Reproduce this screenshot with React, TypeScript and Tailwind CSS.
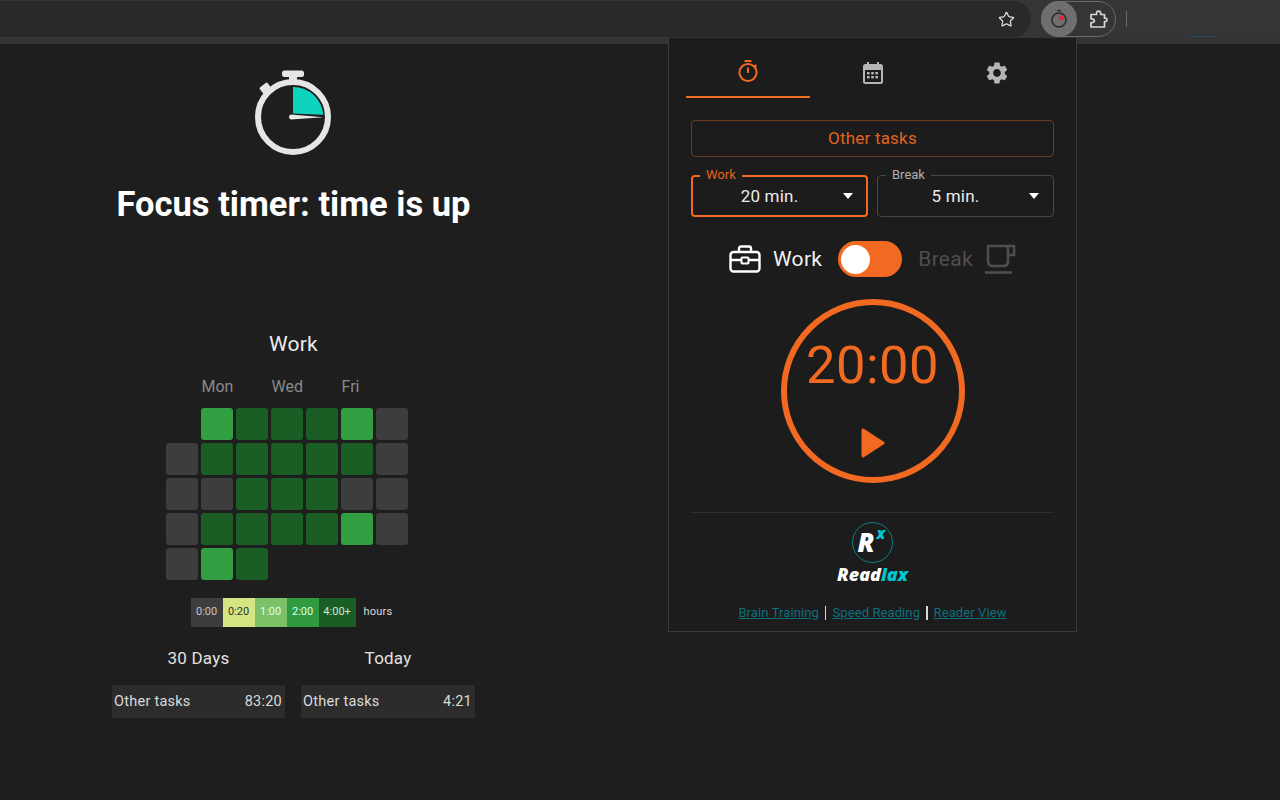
import { Star } from 'lucide-react';

const GREEN = 'bg-[#32a042]';
const DARK = 'bg-[#1a5e25]';
const GRAY = 'bg-[#3d3d3d]';

const heatmap = [
  [null, GREEN, DARK, DARK, DARK, GREEN, GRAY],
  [GRAY, DARK, DARK, DARK, DARK, DARK, GRAY],
  [GRAY, GRAY, DARK, DARK, DARK, GRAY, GRAY],
  [GRAY, DARK, DARK, DARK, DARK, GREEN, GRAY],
  [GRAY, GREEN, DARK, null, null, null, null],
];

const legend = [
  { label: '0:00', w: 'w-[32px]', cls: 'bg-[#3d3d3d] text-[#c4c4c4]' },
  { label: '0:20', w: 'w-[32px]', cls: 'bg-[#d4e582] text-[#333]' },
  { label: '1:00', w: 'w-[32px]', cls: 'bg-[#7cc068] text-[#dfe]' },
  { label: '2:00', w: 'w-[32px]', cls: 'bg-[#2f9a40] text-[#dfe]' },
  { label: '4:00+', w: 'w-[37px]', cls: 'bg-[#1a5e25] text-[#d5e5d5]' },
];

const BigStopwatch = () => (
  <svg width="88" height="92" viewBox="250 66 88 92" className="block">
    <rect x="282" y="70.5" width="22" height="6.5" rx="2.5" fill="#e6e6e6" />
    <rect x="289" y="75" width="8" height="8" fill="#e6e6e6" />
    <rect x="261" y="84" width="10" height="9" rx="1.5" transform="rotate(-38 266 89)" fill="#e6e6e6" />
    <circle cx="293" cy="117" r="35" fill="none" stroke="#e6e6e6" strokeWidth="6" />
    <path d="M293 87 A30 30 0 0 1 323.3 114.8 L293 113.6 Z" fill="#0fd4bd" />
    <path d="M291 114.6 L323.5 117.2 L291 119.6 Q289 119.4 289 117 Q289 114.8 291 114.6 Z" fill="#e6e6e6" />
  </svg>
);

const Toolbar = () => (
  <div className="h-[38px] shrink-0 bg-[#353535] flex items-center relative">
    <div className="w-[1031px] h-[36px] bg-[#292929] rounded-r-[18px] flex items-center justify-end pr-[16px]">
      <Star size={17} strokeWidth={1.8} className="text-[#dcdcdc]" />
    </div>
    <div className="ml-[10px] w-[75px] h-[36px] rounded-full border border-[#6a6a6a] flex items-center">
      <div className="w-[36px] h-[36px] -ml-px rounded-full bg-[#6f6f6f] flex items-center justify-center">
        <svg width="18" height="20" viewBox="0 0 18 20">
          <rect x="7" y="0.8" width="4" height="1.6" fill="#333" />
          <circle cx="9" cy="11" r="7" fill="none" stroke="#2c2c2c" strokeWidth="1.6" />
          <path d="M9 6 A5 5 0 0 1 14 11 L9 10.6 Z" fill="#ef1f3a" />
        </svg>
      </div>
      <div className="flex-1 flex items-center justify-center pl-[4px]">
        <svg width="19" height="19" viewBox="0 0 19 19" fill="none" stroke="#d6d6d6" strokeWidth="1.7" strokeLinejoin="round">
          <path d="M2 4.5 H7.5 C7.2 2.4 8 1.2 9.6 1.2 C11.2 1.2 12 2.4 11.7 4.5 H15.5 V8.2 C17.4 8 18 8.9 18 9.9 C18 10.9 17.4 11.8 15.5 11.6 V17 H2 V12.6 C4.6 12.8 5.4 11.8 5.4 10.8 C5.4 9.8 4.6 8.8 2 9 Z" />
        </svg>
      </div>
    </div>
    <div className="ml-[10px] w-px h-[16px] bg-[#6a6a6a]" />
    <div className="absolute left-[1190px] top-[36px] w-[26px] h-px bg-[#1d4a5f]" />
  </div>
);

const StatBox = ({ title, value, boxWidth }: { title: string; value: string; boxWidth: string }) => (
  <div className={`flex flex-col items-center ${boxWidth}`}>
    <div className="text-[17px] leading-[20px] text-[#e2e2e2] tracking-[0.2px]">{title}</div>
    <div className="mt-[17px] w-full h-[33px] pt-[1px] bg-[#2c2c2c] flex items-center justify-between pl-[2px] pr-[3px] text-[14.5px] text-[#dadada] tracking-[0.25px]">
      <span>Other tasks</span>
      <span>{value}</span>
    </div>
  </div>
);

const LeftColumn = () => (
  <div className="ml-[112px] w-[363px] flex flex-col items-center">
    <div className="mt-[22px]">
      <BigStopwatch />
    </div>
    <h1 className="mt-[26px] text-[34.5px] leading-[40px] font-bold text-white whitespace-nowrap">Focus timer: time is up</h1>
    <div className="mt-[106px] text-[21px] leading-[28px] text-[#ececec] tracking-[0.2px]">Work</div>
    <div className="mt-[19px] w-[242px] h-[20px] mr-[14px] relative text-[16px] leading-[20px] text-[#8a8a8a]">
      <span className="absolute left-[36px]">Mon</span>
      <span className="absolute left-[106px]">Wed</span>
      <span className="absolute left-[176px]">Fri</span>
    </div>
    <div className="mt-[11px] mr-[14px] grid grid-cols-[repeat(7,32px)] grid-rows-[repeat(5,32px)] gap-[3px]">
      {heatmap.flat().map((cell, i) =>
        cell ? <div key={i} className={`rounded-[3px] ${cell}`} /> : <div key={i} />
      )}
    </div>
    <div className="mt-[18px] flex items-center mr-[4px]">
      <div className="flex h-[29px]">
        {legend.map((l) => (
          <div key={l.label} className={`${l.w} ${l.cls} flex items-center justify-center text-[11px]`}>
            {l.label}
          </div>
        ))}
      </div>
      <span className="ml-[8px] text-[11px] text-[#dcdcdc] tracking-[0.2px]">hours</span>
    </div>
    <div className="mt-[21px] w-full flex justify-between">
      <StatBox title="30 Days" value="83:20" boxWidth="w-[173px]" />
      <StatBox title="Today" value="4:21" boxWidth="w-[174px]" />
    </div>
  </div>
);

const TimerIcon = () => (
  <svg width="22" height="24" viewBox="0 0 22 24" fill="none" stroke="#f26a21" strokeWidth="2">
    <path d="M7.5 2 H14.5" />
    <circle cx="11" cy="13.5" r="8.6" />
    <path d="M11 8.5 V14" />
    <path d="M17.5 6 L19.5 8" />
  </svg>
);

const CalendarIcon = () => (
  <svg width="20" height="22" viewBox="0 0 20 22">
    <rect x="0" y="2" width="20" height="20" rx="2.5" fill="#b5b5b5" />
    <rect x="4" y="0" width="2" height="4" fill="#b5b5b5" />
    <rect x="14" y="0" width="2" height="4" fill="#b5b5b5" />
    <rect x="2" y="8" width="16" height="12" fill="#1c1c1c" />
    {[4, 8.2, 12.4].map((x) =>
      [10, 14].map((y) => <rect key={`${x}-${y}`} x={x} y={y} width="2.6" height="2.4" fill="#b5b5b5" />)
    )}
  </svg>
);

const GearIcon = () => (
  <svg width="26" height="26" viewBox="0 0 24 24" fill="#b5b5b5">
    <path d="M19.14 12.94c.04-.3.06-.61.06-.94 0-.32-.02-.64-.07-.94l2.03-1.58c.18-.14.23-.41.12-.61l-1.92-3.32c-.12-.22-.37-.29-.59-.22l-2.39.96c-.5-.38-1.03-.7-1.62-.94l-.36-2.54c-.04-.24-.24-.41-.48-.41h-3.84c-.24 0-.43.17-.47.41l-.36 2.54c-.59.24-1.13.57-1.62.94l-2.39-.96c-.22-.08-.47 0-.59.22L2.74 8.87c-.12.21-.08.47.12.61l2.03 1.58c-.05.3-.09.63-.09.94s.02.64.07.94l-2.03 1.58c-.18.14-.23.41-.12.61l1.92 3.32c.12.22.37.29.59.22l2.39-.96c.5.38 1.03.7 1.62.94l.36 2.54c.05.24.24.41.48.41h3.84c.24 0 .44-.17.47-.41l.36-2.54c.59-.24 1.13-.56 1.62-.94l2.39.96c.22.08.47 0 .59-.22l1.92-3.32c.12-.22.07-.47-.12-.61l-2.01-1.58zM12 15.6c-1.98 0-3.6-1.62-3.6-3.6s1.62-3.6 3.6-3.6 3.6 1.62 3.6 3.6-1.62 3.6-3.6 3.6z" />
  </svg>
);

const BriefcaseIcon = () => (
  <svg width="32" height="28" viewBox="0 0 32 28" fill="none" stroke="#fff" strokeWidth="2.4" strokeLinejoin="round">
    <rect x="1.5" y="7" width="29" height="19.5" rx="3" />
    <path d="M10 7 V3.5 Q10 1.5 12 1.5 H20 Q22 1.5 22 3.5 V7" />
    <path d="M1.5 15 H12.5 M19.5 15 H30.5" />
    <rect x="12.5" y="12.5" width="7" height="6" rx="0.8" strokeWidth="2" />
  </svg>
);

const CupIcon = () => (
  <svg width="32" height="30" viewBox="0 0 32 30" fill="none" stroke="#4e4e4e" strokeWidth="2.6">
    <path d="M4 2 H24 V17 Q24 22 19 22 H9 Q4 22 4 17 Z" />
    <path d="M24 2 H30 V11 H24" />
    <path d="M1 28.5 H28" />
  </svg>
);

const SelectBox = ({ label, value, active, boxWidth }: { label: string; value: string; active?: boolean; boxWidth: string }) => (
  <div
    className={`relative h-[42px] rounded-[4px] flex items-center justify-center pr-[20px] pt-[1px] ${boxWidth} ${
      active ? 'border-2 border-[#f26a21]' : 'border border-[#474747]'
    }`}
  >
    <span
      className={`absolute bg-[#1c1c1c] px-[6px] text-[13px] leading-[14px] ${
        active ? 'left-[7px] top-[-9px] text-[#e8621c]' : 'left-[8px] top-[-8px] text-[#b0b0b0]'
      }`}
    >
      {label}
    </span>
    <span className="text-[17px] text-[#ececec] tracking-[0.2px]">{value}</span>
    <span
      className={`absolute w-0 h-0 border-x-[5px] border-x-transparent border-t-[6px] border-t-white ${
        active ? 'right-[13px] top-[16px]' : 'right-[14px] top-[17px]'
      }`}
    />
  </div>
);

const Popup = () => (
  <div className="absolute left-[668px] top-[38px] w-[409px] h-[594px] bg-[#1c1c1c] border border-t-0 border-[#3a3a3a] flex flex-col">
    <div className="h-[60px] shrink-0 mx-[17px] flex">
      <div className="w-[124px] border-b-2 border-[#f26a21] flex items-center justify-center pt-[8px]">
        <TimerIcon />
      </div>
      <div className="w-[124px] flex items-center justify-center pt-[10px] pl-[1px]">
        <CalendarIcon />
      </div>
      <div className="w-[124px] flex items-center justify-center pt-[10px] pl-[2px]">
        <GearIcon />
      </div>
    </div>
    <div className="px-[22px] flex flex-col">
      <button className="mt-[22px] h-[37px] pt-[1px] rounded-[4px] border border-[#6d3c20] text-[17px] text-[#e0641f] tracking-[0.2px]">
        Other tasks
      </button>
      <div className="mt-[18px] flex gap-[9px]">
        <SelectBox label="Work" value="20 min." active boxWidth="w-[177px]" />
        <SelectBox label="Break" value="5 min." boxWidth="w-[177px]" />
      </div>
      <div className="mt-[24px] h-[36px] flex items-center pl-[38px]">
        <BriefcaseIcon />
        <span className="ml-[12px] pt-[2px] text-[21px] text-[#f2f2f2] tracking-[0.3px]">Work</span>
        <div className="ml-[16px] w-[64px] h-[36px] rounded-full bg-[#f26a21] flex items-center pl-[3px]">
          <div className="w-[29px] h-[29px] rounded-full bg-white" />
        </div>
        <span className="ml-[16px] pt-[2px] text-[21px] text-[#4e4e4e] tracking-[0.3px]">Break</span>
        <span className="ml-[11px]">
          <CupIcon />
        </span>
      </div>
      <div className="mt-[22px] self-center w-[184px] h-[184px] rounded-full border-[6px] border-[#f26a21] flex flex-col items-center">
        <div className="mt-[27px] text-[52.5px] leading-[66px] text-[#f26a21] tracking-[0.5px]">20:00</div>
        <svg width="26" height="30" viewBox="0 0 26 30" className="mt-[30px]">
          <path d="M3 2 L23 15 L3 28 Z" fill="#f26a21" stroke="#f26a21" strokeWidth="3" strokeLinejoin="round" />
        </svg>
      </div>
      <div className="mt-[29px] h-px bg-[#2e2e2e]" />
      <div className="mt-[9px] flex flex-col items-center">
        <div className="relative w-[41px] h-[41px] -ml-[1px] rounded-full border-[1.5px] border-[#0b7f86]">
          <span className="absolute left-[5px] top-[3px] text-[26px] leading-[32px] font-black italic text-white [font-family:'Open_Sans',sans-serif]">
            R
          </span>
          <span className="absolute left-[24px] top-[0px] text-[15px] leading-[20px] font-black italic text-[#00c8d0] [font-family:'Open_Sans',sans-serif]">
            x
          </span>
        </div>
        <div className="mt-[0px] text-[18px] leading-[22px] font-extrabold italic text-white [font-family:'Open_Sans',sans-serif]">
          Read<span className="text-[#00c8d0]">lax</span>
        </div>
      </div>
      <div className="mt-[20px] flex items-center justify-center text-[13px] leading-[16px] text-[#0f6f7d] tracking-[0.1px]">
        <a className="underline">Brain Training</a>
        <span className="mx-[6px] w-[1.5px] h-[14px] bg-[#d8d8d8]" />
        <a className="underline">Speed Reading</a>
        <span className="mx-[6px] w-[1.5px] h-[14px] bg-[#d8d8d8]" />
        <a className="underline">Reader View</a>
      </div>
    </div>
  </div>
);

export default function App() {
  return (
    <div className="relative w-[1280px] h-[800px] overflow-hidden bg-[#1e1e1e] flex flex-col font-['Roboto',sans-serif]">
      <Toolbar />
      <div className="h-[6px] shrink-0 bg-[#333333]" />
      <LeftColumn />
      <Popup />
    </div>
  );
}
